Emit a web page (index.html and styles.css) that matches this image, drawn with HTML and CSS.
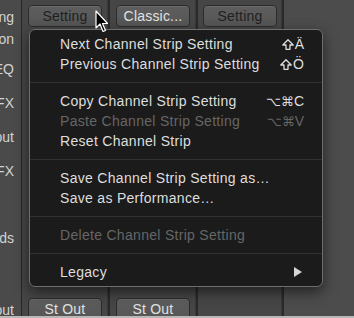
FILE: index.html
```
<!DOCTYPE html>
<html lang="en">
<head>
    <meta charset="UTF-8">
    <title>Channel Strip Setting Menu</title>
    <link rel="stylesheet" href="styles.css">
</head>
<body>
    <div class="mixer">
        <div class="labels">
            <div class="label l-setting">Setting</div>
            <div class="label l-gain">Gain Reduction</div>
            <div class="label l-eq">EQ</div>
            <div class="label l-midi">MIDI FX</div>
            <div class="label l-input">Input</div>
            <div class="label l-audio">Audio FX</div>
            <div class="label l-sends">Sends</div>
            <div class="label l-output">Output</div>
        </div>

        <div class="strip">
            <button class="btn dark-text">Setting</button>
            <button class="btn bottom">St Out</button>
        </div>
        <div class="strip">
            <button class="btn">Classic...</button>
            <button class="btn bottom">St Out</button>
        </div>
        <div class="strip narrow">
            <button class="btn dark-text">Setting</button>
        </div>
        <div class="rest"></div>
    </div>
    <div class="floor"></div>

    <div class="menu">
        <div class="item">
            <span>Next Channel Strip Setting</span>
            <span class="key"><svg class="shift" width="12" height="11" viewBox="0 0 12 11"><polygon points="6,0.8 11.2,6 8,6 8,10.3 4,10.3 4,6 0.8,6" fill="none" stroke="#dedede" stroke-width="1.3" stroke-linejoin="round"/></svg>Ä</span>
        </div>
        <div class="item">
            <span>Previous Channel Strip Setting</span>
            <span class="key"><svg class="shift" width="12" height="11" viewBox="0 0 12 11"><polygon points="6,0.8 11.2,6 8,6 8,10.3 4,10.3 4,6 0.8,6" fill="none" stroke="#dedede" stroke-width="1.3" stroke-linejoin="round"/></svg>Ö</span>
        </div>
        <div class="sep"></div>
        <div class="item"><span>Copy Channel Strip Setting</span><span class="key"><span class="sym">⌥⌘</span>C</span></div>
        <div class="item disabled"><span>Paste Channel Strip Setting</span><span class="key"><span class="sym">⌥⌘</span>V</span></div>
        <div class="item"><span>Reset Channel Strip</span></div>
        <div class="sep"></div>
        <div class="item"><span>Save Channel Strip Setting as…</span></div>
        <div class="item"><span>Save as Performance…</span></div>
        <div class="sep"></div>
        <div class="item disabled"><span>Delete Channel Strip Setting</span></div>
        <div class="sep"></div>
        <div class="item"><span>Legacy</span><span class="arrow"></span></div>
    </div>

    <!-- mouse pointer -->
    <svg class="cursor" width="14" height="24" viewBox="0 0 14 24">
        <path d="M1 1 L1 18 L5 14 L8 21.5 L10.5 20.5 L7.5 13.5 L12.5 13.5 Z" fill="#000" stroke="#fff" stroke-width="1.2" stroke-linejoin="round"/>
    </svg>
</body>
</html>
```

FILE: styles.css
```
body {
    margin: 0;
    width: 354px;
    height: 318px;
    overflow: hidden;
    background: #474747;
    font-family: "Liberation Sans", Arial, "DejaVu Sans", sans-serif;
    font-size: 14px;
    position: relative;
}

.mixer {
    display: flex;
    height: 316px;
    overflow: hidden;
}

.floor {
    height: 2px;
    background: #b8b8b8;
}

.labels {
    width: 21px;
    border-right: 1px solid #262626;
    display: flex;
    flex-direction: column;
    align-items: flex-end;
    background: #4a4a4a;
}

.label {
    color: #d2d2d2;
    line-height: 20px;
    white-space: nowrap;
    padding-right: 7px;
}

.l-setting { margin-top: 7px; }
.l-gain { margin-top: 2px; }
.l-eq { margin-top: 10px; }
.l-midi { margin-top: 14px; }
.l-input { margin-top: 14px; }
.l-audio { margin-top: 14px; }
.l-sends { margin-top: 47px; }
.l-output { margin-top: 52px; }

.strip {
    width: 86px;
    border-right: 2px solid #2a2a2a;
    box-shadow: inset -1px 0 0 #3a3a3a;
    display: flex;
    flex-direction: column;
    align-items: center;
    background: #464646;
}

.strip.narrow {
    width: 84px;
}

.rest {
    flex: 1;
    background: #4c4c4c;
}

.btn {
    width: 74px;
    height: 22px;
    margin-top: 5px;
    border: 1px solid #2c2c2c;
    border-radius: 4px;
    background: linear-gradient(#5e5e5e, #555555);
    box-shadow: inset 0 1px 0 #6a6a6a;
    color: #e2e2e2;
    font-family: inherit;
    font-size: 14px;
    letter-spacing: 0.2px;
    padding: 0;
}

.btn.dark-text {
    color: #1f1f1f;
}

.btn.bottom {
    margin-top: auto;
    margin-bottom: -4px;
}

.menu {
    position: absolute;
    left: 29px;
    top: 29px;
    width: 292px;
    padding: 4px 0;
    background: #1b1b1b;
    border: 1px solid #6e6e6e;
    border-radius: 6px;
    box-shadow: 0 5px 14px rgba(0, 0, 0, 0.55);
}

.item {
    height: 20px;
    display: flex;
    align-items: center;
    justify-content: space-between;
    padding: 0 18px 0 30px;
    color: #dedede;
    letter-spacing: 0.3px;
    white-space: nowrap;
}

.item.disabled {
    color: #666666;
}

.key {
    display: flex;
    align-items: center;
    letter-spacing: 0;
}

.shift {
    margin-right: 1px;
}

.sym {
    font-family: "DejaVu Sans", sans-serif;
    font-size: 13px;
}

.arrow {
    width: 0;
    height: 0;
    border-top: 5px solid transparent;
    border-bottom: 5px solid transparent;
    border-left: 8px solid #d6d6d6;
    margin-right: 2px;
}

.sep {
    height: 1px;
    background: #303030;
    margin: 8px 0;
}

.cursor {
    position: absolute;
    left: 95px;
    top: 10px;
}
```
